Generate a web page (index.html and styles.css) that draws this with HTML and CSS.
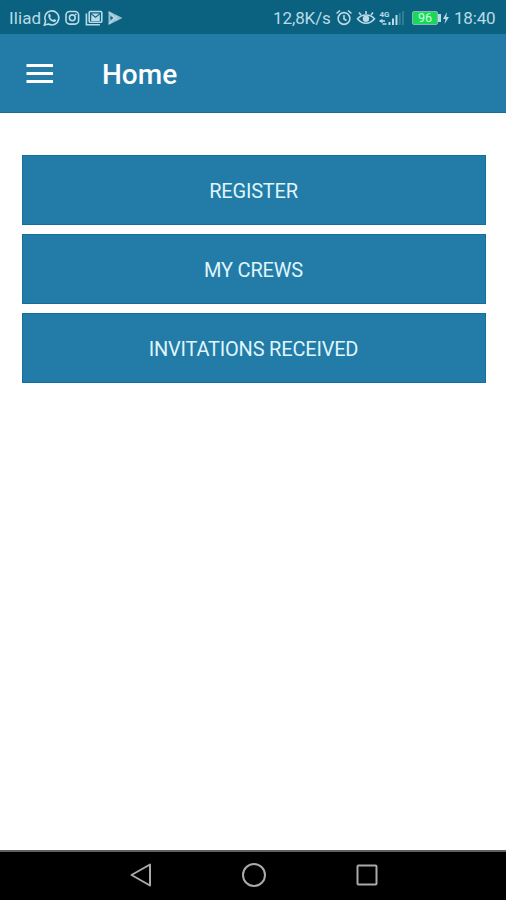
FILE: index.html
```html
<!DOCTYPE html>
<html lang="en">
<head>
<meta charset="utf-8">
<title>Home</title>
<link rel="stylesheet" href="styles.css">
</head>
<body>
<div class="status">
  <span class="carrier">Iliad</span>
  <svg class="notifications" width="80" height="18" viewBox="0 0 80 18" fill="none" stroke="currentColor" stroke-width="1.6">
    <path d="M1.400 16.100l1.200-4A7 7 0 1 1 5.400 15z"/>
    <path d="M5.500 5.200l1.300-.5 1.100 2.400-.8 1.100c.8 1.500 1.700 2.200 3 2.800l1-1 2.100 1.100c0 2-2 2.300-3.300 1.700C7.100 11.700 4.500 8.800 5.500 5.200z" fill="currentColor" stroke="none"/>
    <rect x="23" y="2.500" width="12.600" height="12.600" rx="3.600"/>
    <circle cx="29.300" cy="8.800" r="2.900"/>
    <circle cx="32.800" cy="5.300" r=".9" fill="currentColor" stroke="none"/>
    <path d="M43.400 4.500v11.300h13.500"/>
    <rect x="46.200" y="2.500" width="12.600" height="10.800" rx="1"/>
    <path d="M48.200 12V5.500l4.300 3.500 4.300-3.500V12z" fill="currentColor" stroke="none"/>
    <path d="M48.500 4.500h8L52.500 7.500z" fill="currentColor" stroke="none"/>
    <path d="M65.500 2v14L79.500 9z" fill="currentColor" stroke="none" opacity=".8"/>
    <path d="M66 3.200l8 8M66 14.800l8-8" stroke-width="1.200"/>
    <path d="M67.500 6.800v4.400l2.700-2.200z" fill="#0a6280" stroke="none"/>
  </svg>
  <span class="speed">12,8K/s</span>
  <svg class="signals" width="70" height="18" viewBox="0 0 70 18" fill="none" stroke="currentColor" stroke-width="1.600">
    <circle cx="9" cy="9.500" r="5.900"/>
    <path d="M9 6v4l2.500 1.500M1.500 4.500l3.500-3M16.500 4.500l-3.500-3"/>
    <path d="M22.500 9.800c4.500-5 12.500-5 17 0-4.500 6-12.500 6-17 0z"/>
    <circle cx="31" cy="9.800" r="3.200" fill="currentColor" stroke="none"/>
    <path d="M31 5V2M26 6l-2-2.500M36 6l2-2.500"/>
    <text class="network" x="44.500" y="7.500">4G</text>
    <path d="M45 12h5M47.500 10.500L45 12l2.500 1.500M47.500 15h4" stroke-width="1.300"/>
    <path d="M54.500 16v-3M58 16V9.500M61.500 16V6" stroke-width="2"/>
    <path d="M64.800 16V4M68 16V2" stroke-width="1.800" opacity=".25"/>
  </svg>
  <span class="battery">96</span>
  <svg class="charge" width="8" height="14" viewBox="0 0 8 14" fill="currentColor"><path d="M5 1L1 8h2.500L2.500 13 7 6H4.300z"/></svg>
  <span class="clock">18:40</span>
</div>
<header class="bar">
  <svg class="menu" width="28" height="20" viewBox="0 0 28 20" fill="currentColor"><path d="M.5 0h26.500v3H.5zM.5 8h26.500v3H.5zM.5 16h26.500v3H.5z"/></svg>
  <h1 class="title">Home</h1>
</header>
<main class="content">
  <button class="action">REGISTER</button>
  <button class="action">MY CREWS</button>
  <button class="action">INVITATIONS RECEIVED</button>
</main>
<nav class="nav">
  <svg width="24" height="26" viewBox="0 0 24 26"><path d="M2.500 13L21 2.500v21z"/></svg>
  <svg width="26" height="26" viewBox="0 0 26 26"><circle cx="13" cy="13" r="11"/></svg>
  <svg width="24" height="26" viewBox="0 0 24 26"><rect x="2.500" y="3.500" width="19" height="19" rx="1"/></svg>
</nav>
</body>
</html>
```
FILE: styles.css
```css
* { box-sizing: border-box; }
body {
  margin: 0;
  height: 900px;
  display: flex;
  flex-direction: column;
  background: #fff;
  font-family: Roboto, sans-serif;
  overflow: hidden;
}
svg { flex: none; display: block; }
.status {
  height: 34px;
  flex: none;
  display: flex;
  align-items: center;
  padding: 2px 10px 0 9px;
  background: #0a6280;
  color: #b9dae6;
  font-size: 17px;
  white-space: nowrap;
}
.carrier { width: 34px; letter-spacing: .1px; }
.speed { margin-left: auto; width: 58px; letter-spacing: -.1px; }
.signals { margin-left: 4px; }
.network { font-size: 8px; font-weight: 700; fill: currentColor; stroke: none; }
.battery {
  position: relative;
  width: 26px;
  height: 14px;
  margin-left: 7px;
  border: 1px solid #8ab5bd;
  border-radius: 2px;
  background: #16d956;
  color: #d5ffe0;
  font-size: 12.500px;
  line-height: 12px;
  text-align: center;
}
.battery::after {
  content: "";
  position: absolute;
  left: 25px;
  top: 2px;
  width: 3px;
  height: 8px;
  background: #b9dae6;
}
.charge { margin-left: 4px; }
.clock { margin-left: 4px; width: 42px; letter-spacing: -.2px; }
.bar {
  height: 79px;
  flex: none;
  display: flex;
  align-items: center;
  padding-left: 26px;
  background: #237ca7;
  border-bottom: 1px solid #12709a;
  color: #fff;
}
.menu { margin-top: 2px; }
.title { margin: 3px 0 0 48px; font-size: 28px; line-height: 34px; font-weight: 500; }
.content {
  flex: 1;
  display: flex;
  flex-direction: column;
  gap: 9px;
  padding: 42px 20px 0 22px;
}
.action {
  height: 70px;
  flex: none;
  padding: 2px 1px 0 0;
  border: 1px solid #12709a;
  border-radius: 0;
  background: #237ca7;
  color: #dff5fb;
  font: 400 20px/24px Roboto, sans-serif;
  letter-spacing: -.2px;
  white-space: nowrap;
}
.nav {
  height: 50px;
  flex: none;
  display: flex;
  align-items: center;
  justify-content: center;
  gap: 88px;
  padding: 0 0 2px 1px;
  border-top: 2px solid #606060;
  background: #000;
}
.nav svg { fill: none; stroke: #aaa; stroke-width: 2; stroke-linejoin: round; }
```
